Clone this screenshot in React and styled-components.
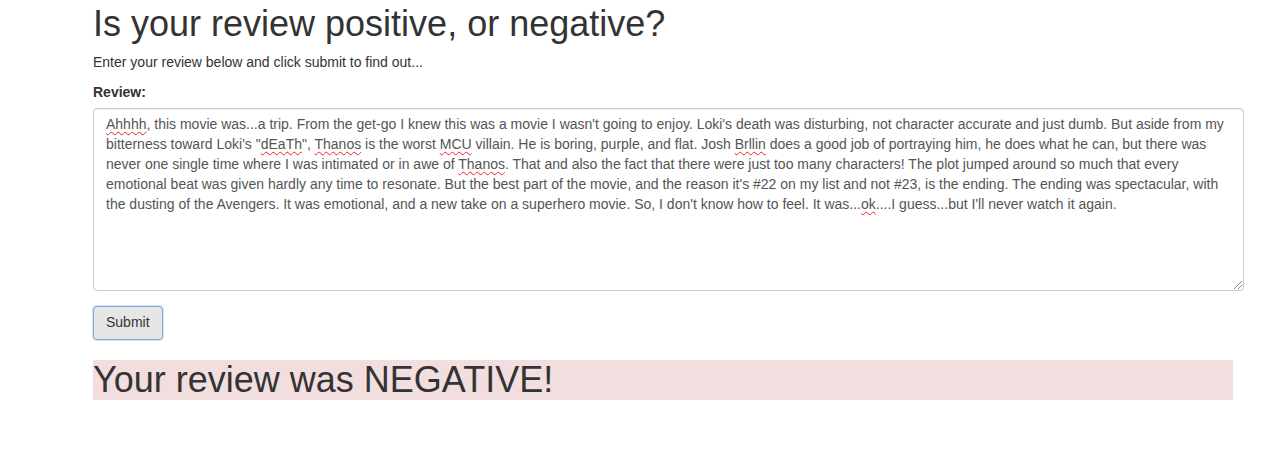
import React from "react";
import styled, { createGlobalStyle } from "styled-components";

const GlobalStyle = createGlobalStyle`
  body {
    margin: 0;
    background: #fff;
    font-family: "Liberation Sans", Arial, sans-serif;
    font-size: 14px;
    line-height: 1.42857;
    color: #333;
  }
`;

const Container = styled.div`
  width: 1140px;
  margin-left: 93px;
  padding-top: 3.5px;
`;

const Title = styled.h1`
  font-size: 36px;
  font-weight: 400;
  line-height: 1.1;
  margin: 0 0 10px 0;
  color: #333;
`;

const Intro = styled.p`
  margin: 0 0 10px 0;
`;

const FormGroup = styled.div`
  margin-bottom: 15px;
`;

const Label = styled.label`
  display: inline-block;
  font-weight: 700;
  margin-bottom: 5px;
`;

const ReviewBox = styled.div`
  position: relative;
  box-sizing: border-box;
  width: 1151px;
  height: 183px;
  padding: 6px 12px;
  border: 1px solid #ccc;
  border-radius: 4px;
  box-shadow: inset 0 1px 1px rgba(0, 0, 0, 0.075);
  color: #555;
  white-space: nowrap;
  overflow: hidden;
`;

const Misspelt = styled.span`
  text-decoration: underline wavy #e22;
  text-decoration-thickness: 1px;
  text-underline-offset: 2px;
`;

const Grip = styled.svg`
  position: absolute;
  right: 1px;
  bottom: 1px;
`;

const SubmitButton = styled.button`
  box-sizing: border-box;
  height: 34px;
  padding: 6px 12px;
  font-family: inherit;
  font-size: 14px;
  line-height: 1.42857;
  color: #333;
  background: #e6e6e6;
  border: 1px solid #7ea6e0;
  border-radius: 4px;
  box-shadow: 0 0 0 1px rgba(126, 166, 224, 0.35);
  cursor: pointer;
`;

const Result = styled.h1`
  font-size: 36px;
  font-weight: 400;
  line-height: 1.1;
  margin: 20px 0 0 0;
  color: #333;
  background: ${props => (props.positive ? "#dff0d8" : "#f2dede")};
`;

const M = ({ children }) => <Misspelt>{children}</Misspelt>;

export default function App() {
  return (
    <>
      <GlobalStyle />
      <Container>
        <Title>Is your review positive, or negative?</Title>
        <Intro>Enter your review below and click submit to find out...</Intro>
        <FormGroup>
          <Label>Review:</Label>
          <ReviewBox role="textbox">
            <M>Ahhhh</M>, this movie was...a trip. From the get-go I knew this was a movie I wasn't going to enjoy. Loki's death was disturbing, not character accurate and just dumb. But aside from my
            <br />
            bitterness toward Loki's "<M>dEaTh</M>", <M>Thanos</M> is the worst <M>MCU</M> villain. He is boring, purple, and flat. Josh <M>Brllin</M> does a good job of portraying him, he does what he can, but there was
            <br />
            never one single time where I was intimated or in awe of <M>Thanos</M>. That and also the fact that there were just too many characters! The plot jumped around so much that every
            <br />
            emotional beat was given hardly any time to resonate. But the best part of the movie, and the reason it's #22 on my list and not #23, is the ending. The ending was spectacular, with
            <br />
            the dusting of the Avengers. It was emotional, and a new take on a superhero movie. So, I don't know how to feel. It was...<M>ok</M>....I guess...but I'll never watch it again.
            <Grip width="9" height="9" viewBox="0 0 9 9">
              <line x1="1" y1="9" x2="9" y2="1" stroke="#888" strokeWidth="1" />
              <line x1="5" y1="9" x2="9" y2="5" stroke="#888" strokeWidth="1" />
            </Grip>
          </ReviewBox>
        </FormGroup>
        <SubmitButton>Submit</SubmitButton>
        <Result>Your review was NEGATIVE!</Result>
      </Container>
    </>
  );
}
